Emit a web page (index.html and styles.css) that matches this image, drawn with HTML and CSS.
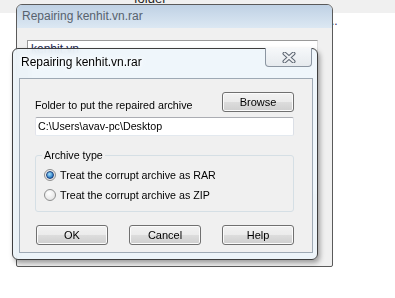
FILE: index.html
```html
<!DOCTYPE html>
<html>
<head>
    <meta charset="UTF-8">
    <title>Repairing kenhit.vn.rar</title>
    <link rel="stylesheet" href="styles.css">
</head>
<body>
    <div class="desktop">
        <div class="top-strip">
            <span class="peek-text">folder</span>
        </div>
        <span class="dots">..</span>

        <!-- window behind -->
        <div class="bg-win">
            <div class="bg-title">Repairing kenhit.vn.rar</div>
            <div class="bg-body">
                <div class="bg-box">
                    <div class="bg-line">kenhit.vn</div>
                </div>
            </div>
        </div>

        <!-- active dialog -->
        <div class="dlg">
            <div class="dlg-title">Repairing kenhit.vn.rar</div>
            <div class="close-btn">
                <svg width="14" height="11" viewBox="0 0 14 11">
                    <path d="M2.5 1.5 L11.5 9.5 M11.5 1.5 L2.5 9.5" stroke="#5b6470" stroke-width="4" stroke-linecap="round"/>
                    <path d="M2.5 1.5 L11.5 9.5 M11.5 1.5 L2.5 9.5" stroke="#eef0f3" stroke-width="2" stroke-linecap="round"/>
                </svg>
            </div>
            <div class="client">
                <div class="folder-row">
                    <span class="label">Folder to put the repaired archive</span>
                    <button class="btn">Browse</button>
                </div>
                <div class="textbox">C:\Users\avav-pc\Desktop</div>

                <fieldset class="group">
                    <legend>Archive type</legend>
                    <div class="radio-row">
                        <span class="radio checked"></span>
                        <span>Treat the corrupt archive as RAR</span>
                    </div>
                    <div class="radio-row">
                        <span class="radio"></span>
                        <span>Treat the corrupt archive as ZIP</span>
                    </div>
                </fieldset>

                <div class="btn-row">
                    <button class="btn">OK</button>
                    <button class="btn">Cancel</button>
                    <button class="btn">Help</button>
                </div>
            </div>
        </div>
    </div>
</body>
</html>
```

FILE: styles.css
```css
/* Global */
* {
    margin: 0;
    padding: 0;
    box-sizing: border-box;
}

body {
    background: #fff;
    font-family: 'Liberation Sans', Arial, sans-serif;
    font-size: 11px;
    color: #000;
}

.desktop {
    position: relative;
    width: 395px;
    height: 298px;
    overflow: hidden;
    background: #fff;
}

.top-strip {
    height: 13px;
    background: #f0f0f0;
    overflow: hidden;
}

.peek-text {
    display: block;
    margin-left: 134px;
    margin-top: -9px;
    font-size: 13px;
    color: #1e1e1e;
}

.dots {
    position: absolute;
    left: 331px;
    top: 14px;
    font-size: 12px;
    color: #3a2a5a;
}

/* Window behind */
.bg-win {
    position: absolute;
    left: 16px;
    top: 4px;
    width: 317px;
    height: 263px;
    border: 1px solid #5a5a5a;
    border-radius: 6px 6px 2px 2px;
    background: #f0f0f0;
    overflow: hidden;
}

.bg-title {
    height: 23px;
    line-height: 23px;
    padding-left: 5px;
    font-size: 12px;
    color: #57626e;
    background: linear-gradient(to bottom, #bfd1e4, #dce8f3);
}

.bg-body {
    padding: 12px 14px 0 10px;
}

.bg-box {
    height: 155px;
    border: 1px solid #9a9a9a;
    border-right-color: #dcdcdc;
    border-bottom-color: #dcdcdc;
    background: #fff;
    padding: 1px 3px;
}

.bg-line {
    font-size: 12px;
    line-height: 14px;
    color: #1c2a52;
}

/* Active dialog */
.dlg {
    position: absolute;
    left: 12px;
    top: 48px;
    width: 306px;
    height: 212px;
    border: 1px solid #3e3e3e;
    border-radius: 6px;
    background: rgba(236, 245, 250, 0.85);
    backdrop-filter: blur(3px);
    box-shadow: 2px 3px 5px rgba(0, 0, 0, 0.35);
    display: flex;
    flex-direction: column;
    padding: 0 4px 6px 6px;
}

.dlg-title {
    height: 29px;
    line-height: 27px;
    padding-left: 2px;
    font-size: 12px;
    color: #000;
    text-shadow: 0 0 6px #fff, 0 0 3px #fff;
}

.close-btn {
    position: absolute;
    right: 5px;
    top: -1px;
    width: 47px;
    height: 19px;
    border: 1px solid #8b95a1;
    border-top: none;
    border-radius: 0 0 4px 4px;
    background: linear-gradient(to bottom, #f6f8fa, #e6eaee);
    display: flex;
    align-items: center;
    justify-content: center;
}

.client {
    flex: 1;
    background: #f0f0f0;
    border: 1px solid #9ea9b4;
    padding: 13px 18px 0 15px;
    font-size: 10.7px;
}

.folder-row {
    display: flex;
    justify-content: space-between;
    align-items: flex-end;
    height: 20px;
}

.label {
    line-height: 14px;
}

.btn {
    width: 72px;
    height: 20px;
    border: 1px solid #707070;
    border-radius: 3px;
    background: linear-gradient(to bottom, #f2f2f2 0%, #ebebeb 50%, #dddddd 50%, #cfcfcf 100%);
    box-shadow: inset 0 0 0 1px #fbfbfb;
    font-family: 'Liberation Sans', Arial, sans-serif;
    font-size: 11px;
    color: #000;
}

.textbox {
    margin-top: 5px;
    height: 19px;
    line-height: 17px;
    padding-left: 2px;
    background: #fff;
    border: 1px solid;
    border-color: #abadb3 #dbdfe6 #e3e9ef #e2e3ea;
    border-radius: 2px;
}

.group {
    margin-top: 13px;
    border: 1px solid #d5dfe5;
    border-radius: 3px;
    padding: 3px 0 6px 6px;
}

.group legend {
    padding: 0 2px;
    line-height: 13px;
}

.radio-row {
    display: flex;
    align-items: center;
    height: 20px;
    margin-left: 2px;
    gap: 4px;
}

.radio {
    width: 12px;
    height: 12px;
    border-radius: 50%;
    border: 1px solid #8e8f8f;
    background: radial-gradient(circle at 40% 35%, #ffffff, #dcdcdc);
    display: flex;
    align-items: center;
    justify-content: center;
}

.radio.checked::after {
    content: "";
    width: 6px;
    height: 6px;
    border-radius: 50%;
    border: 1px solid #1b3f7a;
    background: radial-gradient(circle at 40% 35%, #a8e2fb, #2a7dc8 70%, #17457f);
}

.btn-row {
    margin-top: 13px;
    padding-left: 1px;
    display: flex;
    justify-content: space-between;
}
```
